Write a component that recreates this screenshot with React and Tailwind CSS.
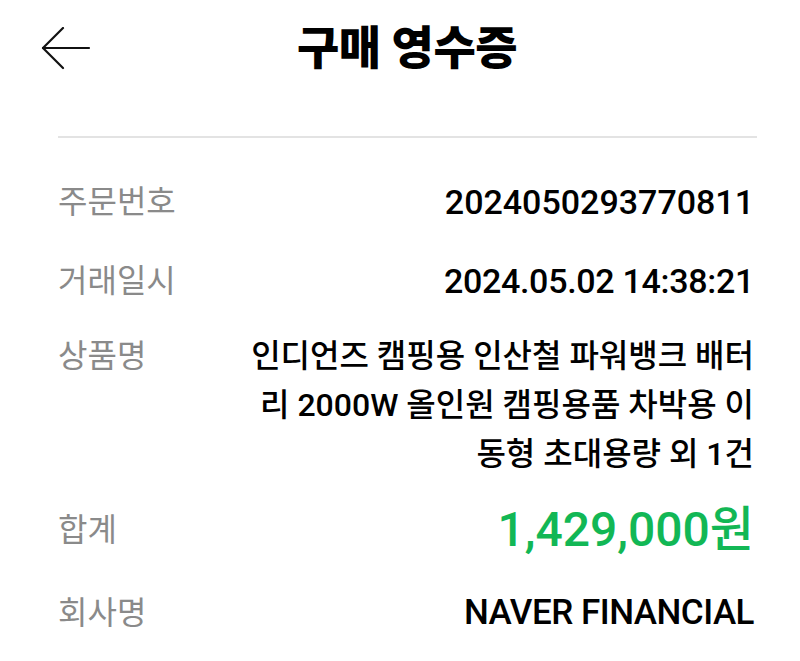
const font = { fontFamily: "Roboto, 'Noto Sans CJK KR', sans-serif" };

function BackArrow() {
  return (
    <svg width="50" height="44" viewBox="0 0 50 44" fill="none" stroke="#111" strokeWidth="2.2" strokeLinecap="round" strokeLinejoin="round">
      <path d="M2 21 H48" />
      <path d="M22 1 L2 21 L22 41" />
    </svg>
  );
}

function Row({ label, children, className = '', lh = 'leading-[40px]' }) {
  return (
    <div className={`flex justify-between items-start ${className}`}>
      <div className={`text-[32px] text-[#8a8a8a] shrink-0 ${lh}`}>{label}</div>
      {children}
    </div>
  );
}

export default function App() {
  return (
    <div className="w-[800px] h-[661px] bg-white overflow-hidden" style={font}>
      <div className="grid grid-cols-[1fr_auto_1fr] items-center h-[96px] pl-[41px] pr-[41px]">
        <div className="pt-[1px]">
          <BackArrow />
        </div>
        <div className="text-[46px] font-black text-black tracking-[-0.5px] ml-[14px]">구매 영수증</div>
        <div />
      </div>
      <div className="mt-[40px] ml-[58px] mr-[43px] h-[2px] bg-[#e3e3e3]" />
      <div className="pl-[58px] pr-[46px]">
        <Row label="주문번호" className="mt-[44px]">
          <div className="text-[34px] leading-[40px] font-medium text-black">2024050293770811</div>
        </Row>
        <Row label="거래일시" className="mt-[39px]">
          <div className="text-[34px] leading-[40px] font-medium text-black tracking-[-0.3px]">2024.05.02 14:38:21</div>
        </Row>
        <Row label="상품명" className="mt-[31px]" lh="leading-[49px]">
          <div className="w-[520px] text-right text-[32px] leading-[49px] font-medium text-black">
            인디언즈 캠핑용 인산철 파워뱅크 배터리 2000W 올인원 캠핑용품 차박용 이동형 초대용량 외 1건
          </div>
        </Row>
        <Row label="합계" className="mt-[25px]" lh="leading-[52px]">
          <div className="text-[48px] leading-[52px] font-medium text-[#12b755]">1,429,000원</div>
        </Row>
        <Row label="회사명" className="mt-[37px]">
          <div className="text-[35px] leading-[40px] font-medium text-black tracking-[-0.5px]">NAVER FINANCIAL</div>
        </Row>
      </div>
    </div>
  );
}
